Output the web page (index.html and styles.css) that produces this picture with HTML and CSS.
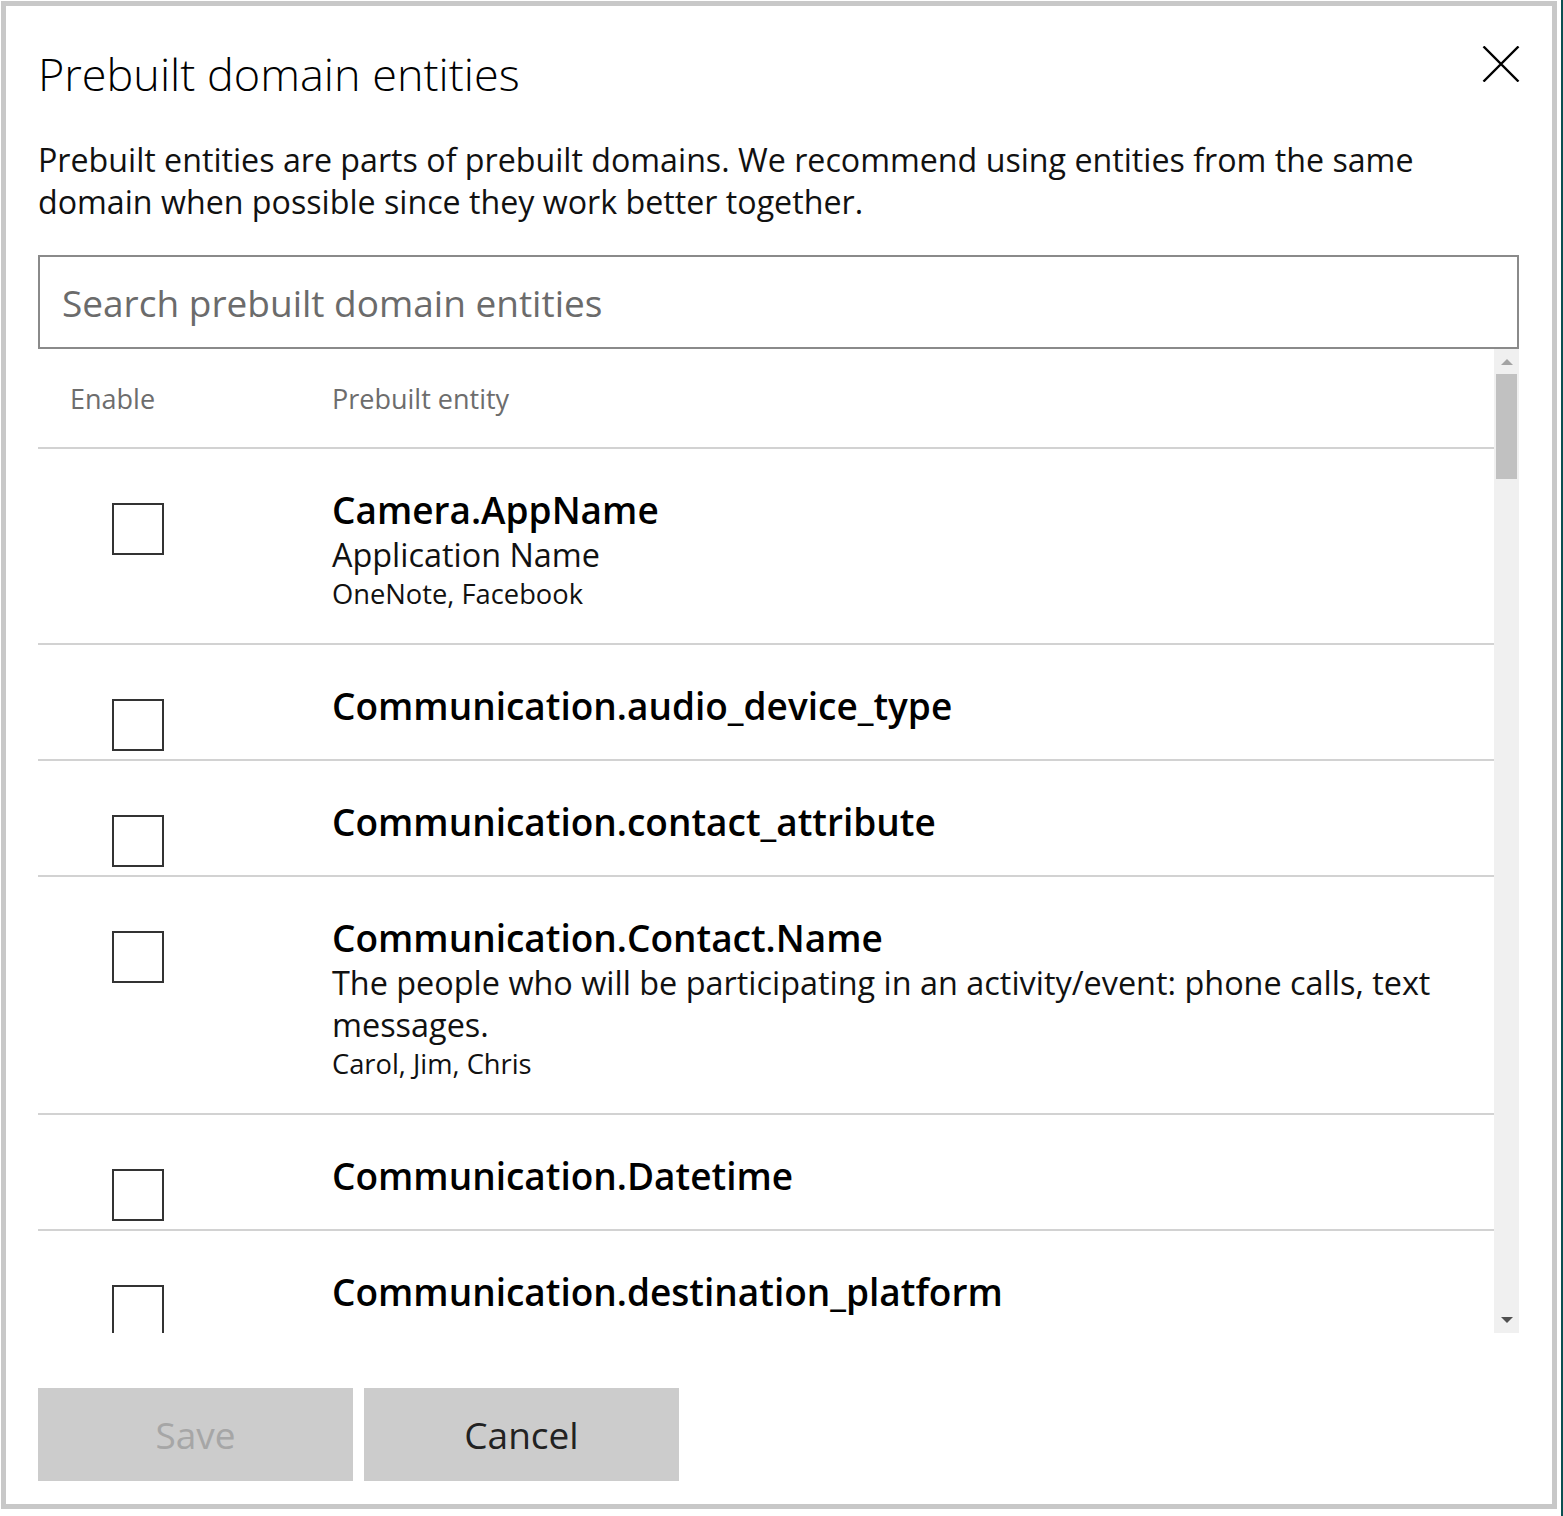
FILE: index.html
```html
<!DOCTYPE html>
<html lang="en">
<head>
<meta charset="utf-8">
<title>Prebuilt domain entities</title>
<link rel="stylesheet" href="styles.css">
</head>
<body>
<div class="edge"></div>
<div class="dialog">
  <div class="dialog-head">
    <h1 class="title">Prebuilt domain entities</h1>
    <button class="close" aria-label="Close">
      <svg width="38" height="36" viewBox="0 0 38 36"><path d="M1.5 0.5 L36.5 35.5 M36.5 0.5 L1.5 35.5" stroke="#000" stroke-width="2.4" fill="none"/></svg>
    </button>
  </div>
  <p class="intro">Prebuilt entities are parts of prebuilt domains. We recommend using entities from the same domain when possible since they work better together.</p>
  <div class="search">Search prebuilt domain entities</div>
  <div class="list-wrap">
    <div class="list">
      <div class="list-head">
        <div class="col-enable">Enable</div>
        <div class="col-name">Prebuilt entity</div>
      </div>
      <div class="row">
        <div class="cell-check"><span class="checkbox"></span></div>
        <div class="cell-text">
          <div class="name">Camera.AppName</div>
          <div class="desc">Application Name</div>
          <div class="examples">OneNote, Facebook</div>
        </div>
      </div>
      <div class="row">
        <div class="cell-check"><span class="checkbox"></span></div>
        <div class="cell-text"><div class="name">Communication.audio_device_type</div></div>
      </div>
      <div class="row">
        <div class="cell-check"><span class="checkbox"></span></div>
        <div class="cell-text"><div class="name">Communication.contact_attribute</div></div>
      </div>
      <div class="row">
        <div class="cell-check"><span class="checkbox"></span></div>
        <div class="cell-text">
          <div class="name">Communication.Contact.Name</div>
          <div class="desc">The people who will be participating in an activity/event: phone calls, text messages.</div>
          <div class="examples">Carol, Jim, Chris</div>
        </div>
      </div>
      <div class="row">
        <div class="cell-check"><span class="checkbox"></span></div>
        <div class="cell-text"><div class="name">Communication.Datetime</div></div>
      </div>
      <div class="row">
        <div class="cell-check"><span class="checkbox"></span></div>
        <div class="cell-text"><div class="name">Communication.destination_platform</div></div>
      </div>
    </div>
    <div class="scrollbar">
      <div class="arrow arrow-up"></div>
      <div class="thumb"></div>
      <div class="track-fill"></div>
      <div class="arrow arrow-down"></div>
    </div>
  </div>
  <div class="actions">
    <button class="btn btn-save" disabled>Save</button>
    <button class="btn btn-cancel">Cancel</button>
  </div>
</div>
</body>
</html>
```
FILE: styles.css
```css
html, body {
  margin: 0;
  padding: 0;
  background: #fff;
}
body {
  font-family: "Open Sans", "Noto Sans", sans-serif;
  color: #000;
  height: 1516px;
  overflow: hidden;
}
.edge {
  position: fixed;
  top: 0;
  right: 0;
  width: 2px;
  height: 100%;
  background: #0b4f52;
}
.dialog {
  box-sizing: border-box;
  margin: 1px 0 0 1px;
  width: 1556px;
  height: 1508px;
  border: 5px solid #c8c8c8;
  padding: 0 33px 0 32px;
  display: flex;
  flex-direction: column;
}
.dialog-head {
  display: flex;
  justify-content: space-between;
  align-items: flex-start;
}
.title {
  margin: 40px 0 0 0;
  font-weight: 300;
  font-size: 45px;
  line-height: 56px;
  color: #000;
}
.close {
  border: 0;
  background: none;
  padding: 0;
  margin: 40px -1px 0 0;
  width: 38px;
  height: 36px;
  cursor: pointer;
}
.close svg {
  display: block;
}
.intro {
  margin: 37px 0 0 0;
  padding-right: 40px;
  font-size: 32.2px;
  line-height: 42px;
  color: #111;
}
.search {
  box-sizing: border-box;
  margin-top: 32px;
  height: 94px;
  border: 2px solid #8a8a8a;
  padding: 0 22px;
  display: flex;
  align-items: center;
  font-size: 37px;
  color: #6b6b6b;
}
.list-wrap {
  display: flex;
  height: 984px;
}
.list {
  flex: 1;
  overflow: hidden;
}
.list-head {
  height: 98px;
  border-bottom: 2px solid #d2d2d2;
  display: flex;
  align-items: center;
  font-size: 27px;
  color: #6d6d6d;
}
.col-enable {
  width: 262px;
  padding-left: 32px;
}
.row {
  display: flex;
  border-bottom: 2px solid #d2d2d2;
}
.cell-check {
  width: 294px;
  flex: none;
}
.checkbox {
  display: block;
  box-sizing: border-box;
  width: 52px;
  height: 52px;
  border: 2px solid #333;
  margin: 54px 0 8px 74px;
}
.cell-text {
  padding: 38px 40px 30px 0;
}
.name {
  font-weight: 600;
  font-size: 37px;
  line-height: 46px;
}
.desc {
  font-size: 32.4px;
  line-height: 42px;
  color: #111;
}
.examples {
  font-size: 27.3px;
  line-height: 38px;
  color: #111;
}
.scrollbar {
  width: 25px;
  flex: none;
  background: #f0f0f0;
  display: flex;
  flex-direction: column;
  align-items: center;
}
.arrow {
  width: 0;
  height: 0;
  border-left: 6px solid transparent;
  border-right: 6px solid transparent;
}
.arrow-up {
  margin-top: 10px;
  border-bottom: 6px solid #a3a3a3;
}
.thumb {
  margin-top: 9px;
  width: 21px;
  height: 105px;
  background: #c1c1c1;
}
.track-fill {
  flex: 1;
}
.arrow-down {
  margin-bottom: 10px;
  border-top: 6px solid #505050;
}
.actions {
  margin-top: 55px;
  display: flex;
  gap: 11px;
}
.btn {
  width: 315px;
  height: 93px;
  border: 0;
  background: #cccccc;
  font-family: "Open Sans", "Noto Sans", sans-serif;
  font-size: 37px;
  color: #222;
  padding: 0;
}
.btn-save {
  color: #a6a6a6;
}
```
